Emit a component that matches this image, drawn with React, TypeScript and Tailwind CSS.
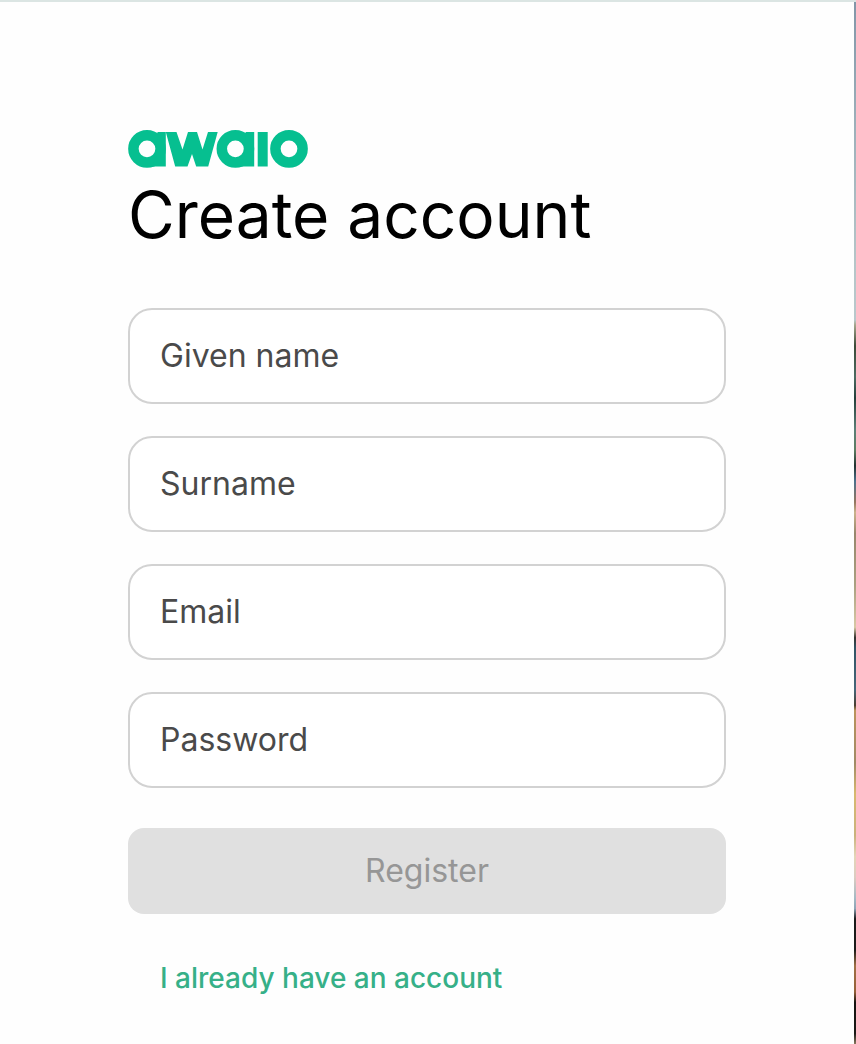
const fields = [
  { id: 'givenName', label: 'Given name', type: 'text', autoComplete: 'given-name' },
  { id: 'surname', label: 'Surname', type: 'text', autoComplete: 'family-name' },
  { id: 'email', label: 'Email', type: 'email', autoComplete: 'email' },
  { id: 'password', label: 'Password', type: 'password', autoComplete: 'new-password' },
] as const

function Logo() {
  return (
    <svg viewBox="0 0 180 40" className="h-10 w-45 text-[#06bf90]" role="img" aria-label="awaio">
      <g fill="none" stroke="currentColor" strokeWidth="10.5">
        <circle cx="19" cy="19.8" r="13.6" />
        <circle cx="107.4" cy="19.8" r="13.6" />
        <circle cx="161" cy="19.8" r="13.6" />
      </g>
      <g fill="currentColor">
        <path d="M29.500 3h8.300v34.500H24l4-9z" />
        <path d="M117.700 3h8.500v34.500H112l4-9z" />
        <path d="M37.800 3h10.700l6 17.500 5.500-17.500h9l5.500 17.500 5.500-17.500h9.700l-9.500 34.500h-12l-4.200-12.500-4.500 12.500h-12.300z" />
        <path d="M129.700 3h10v34.500h-10z" />
      </g>
    </svg>
  )
}

function TextField({ id, label, type, autoComplete }: (typeof fields)[number]) {
  return (
    <div className="flex h-24 items-center gap-4 rounded-3xl border-2 border-[#d2d2d2] bg-white px-[30px] text-[32px] text-[#4a4a4a] focus-within:border-[#36b088]">
      <label htmlFor={id} className="shrink-0">
        {label}
      </label>
      <input
        id={id}
        name={id}
        type={type}
        autoComplete={autoComplete}
        className="h-full w-full min-w-0 flex-1 bg-transparent outline-none"
      />
    </div>
  )
}

export default function App() {
  return (
    <div className="flex min-h-screen border-t-2 border-[#dbe5e3] bg-[#fefefe] font-[Inter,sans-serif]">
      <main className="min-w-0 flex-1 px-32 pt-[127px] pb-8">
        <Logo />
        <h1 className="mt-2 text-[64px] leading-[76px] text-black">Create account</h1>

        <form className="mt-[55px]" onSubmit={(e) => e.preventDefault()}>
          <div className="flex flex-col gap-8">
            {fields.map((field) => (
              <TextField key={field.id} {...field} />
            ))}
          </div>
          <button
            type="submit"
            disabled
            className="mt-10 h-[86px] w-full rounded-2xl bg-[#e0e0e0] text-[32px] text-[#969696]"
          >
            Register
          </button>
        </form>

        <a href="#login" className="mt-11 ml-8 inline-block text-[28px] leading-10 font-medium text-[#36b088]">
          I already have an account
        </a>
      </main>

      {/* Edge of the cover photo */}
      <div
        className="w-0.5 shrink-0 bg-[linear-gradient(to_bottom,#8296a8_0%,#9db0ba_12%,#b5c5c8_25%,#b9c8cc_30.500%,#a5a58c_31%,#3c4a38_33%,#4d6b62_36%,#243f3b_38%,#5c7f78_41%,#5d7d62_43%,#223230_44.500%,#4d718c_46%,#94755f_48%,#cbb28c_49%,#97866c_51%,#aaa081_56%,#d8c8a5_60%,#35332f_61%,#315465_62%,#46677a_66%,#4a3d30_67.500%,#bb935c_68%,#a08a66_73%,#d8b96f_76%,#c9b27d_80%,#e4d5b8_82%,#dccbc1_84%,#a4b9c4_86%,#8ea3b5_87%,#1a1a1a_88%,#1c1c1a_91%,#a07046_92.500%,#956039_95%,#161411_96%,#1b1916_99%,#8a785f_100%)]"
        aria-hidden
      />
    </div>
  )
}
